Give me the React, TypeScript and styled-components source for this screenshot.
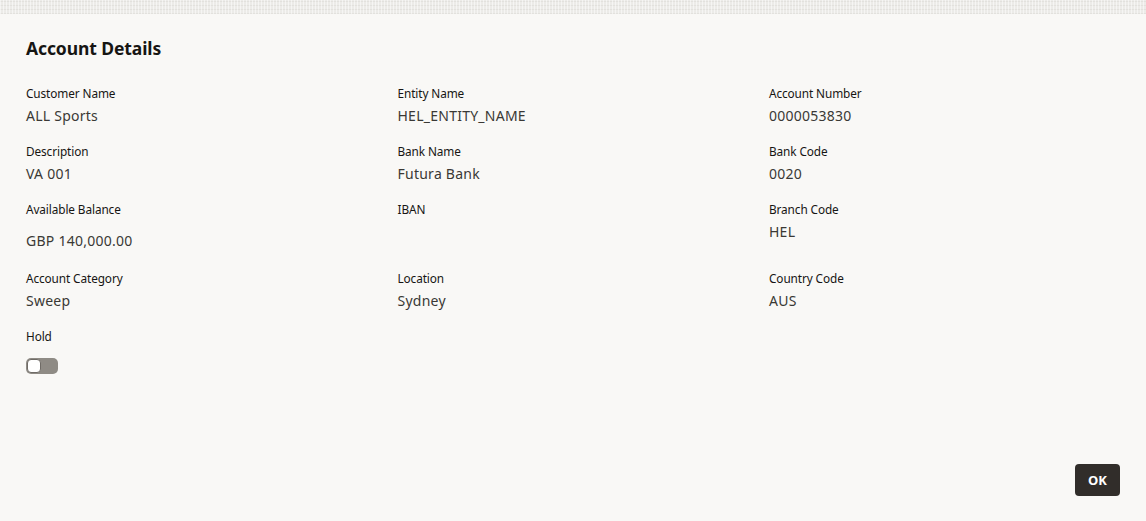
import React, { useState } from 'react';
import { styled, createGlobalStyle } from 'styled-components';

const GlobalStyle = createGlobalStyle`
  html, body {
    margin: 0;
    padding: 0;
    background: #f9f8f6;
    font-family: 'Noto Sans', 'Liberation Sans', sans-serif;
    color: #161513;
  }
`;

const Page = styled.div`
  width: 1146px;
  height: 521px;
  display: flex;
  flex-direction: column;
  background: #f9f8f6;
  overflow: hidden;
`;

const TopStrip = styled.div`
  height: 14px;
  flex-shrink: 0;
  background-color: #ecebe8;
  background-image:
    repeating-linear-gradient(90deg, rgba(255, 255, 255, 0.5) 0 1px, transparent 1px 3px),
    repeating-linear-gradient(0deg, rgba(220, 218, 214, 0.6) 0 1px, transparent 1px 4px);
`;

const Body = styled.div`
  flex: 1;
  padding: 22px 5px 0 26px;
`;

const Heading = styled.h1`
  margin: 0 0 25px;
  font-size: 17.5px;
  line-height: 24px;
  font-weight: 700;
  letter-spacing: -0.1px;
  color: #161513;
`;

const Grid = styled.div`
  display: grid;
  grid-template-columns: repeat(3, 371.5px);
`;

const Field = styled.div`
  margin-bottom: 17px;
`;

const Label = styled.div`
  font-size: 11.8px;
  line-height: 16px;
  letter-spacing: -0.1px;
  color: #161513;
`;

const Value = styled.div<{ $shift?: boolean }>`
  margin-top: ${(p) => (p.$shift ? '14px' : '5px')};
  margin-bottom: ${(p) => (p.$shift ? '2px' : '0')};
  font-size: 14px;
  line-height: 20px;
  letter-spacing: 0.25px;
  color: #3a3835;
  min-height: 20px;
`;

const Toggle = styled.button<{ $on: boolean }>`
  margin-top: 14px;
  width: 32px;
  height: 16px;
  padding: 1px;
  border: none;
  border-radius: 5px;
  background: ${(p) => (p.$on ? '#227e9e' : '#8f8b85')};
  display: flex;
  justify-content: ${(p) => (p.$on ? 'flex-end' : 'flex-start')};
  cursor: pointer;
`;

const Knob = styled.span`
  width: 14px;
  height: 14px;
  border-radius: 4px;
  background: #ffffff;
  box-sizing: border-box;
  border: 1px solid #6f6b66;
`;

const Footer = styled.div`
  display: flex;
  justify-content: flex-end;
  padding: 0 26px 25px;
`;

const OkButton = styled.button`
  width: 45px;
  height: 32px;
  border: none;
  border-radius: 4px;
  background: #312d2a;
  color: #ffffff;
  font-family: 'Noto Sans', 'Liberation Sans', sans-serif;
  font-size: 13px;
  font-weight: 700;
  cursor: pointer;
`;

const fields: { label: string; value: string; shift?: boolean }[] = [
  { label: 'Customer Name', value: 'ALL Sports' },
  { label: 'Entity Name', value: 'HEL_ENTITY_NAME' },
  { label: 'Account Number', value: '0000053830' },
  { label: 'Description', value: 'VA 001' },
  { label: 'Bank Name', value: 'Futura Bank' },
  { label: 'Bank Code', value: '0020' },
  { label: 'Available Balance', value: 'GBP 140,000.00', shift: true },
  { label: 'IBAN', value: '' },
  { label: 'Branch Code', value: 'HEL' },
  { label: 'Account Category', value: 'Sweep' },
  { label: 'Location', value: 'Sydney' },
  { label: 'Country Code', value: 'AUS' },
];

function App() {
  const [hold, setHold] = useState(false);
  return (
    <Page>
      <GlobalStyle />
      <TopStrip />
      <Body>
        <Heading>Account Details</Heading>
        <Grid>
          {fields.map((f) => (
            <Field key={f.label}>
              <Label>{f.label}</Label>
              <Value $shift={f.shift}>{f.value}</Value>
            </Field>
          ))}
          <Field>
            <Label>Hold</Label>
            <Toggle $on={hold} onClick={() => setHold(!hold)} aria-label="Hold">
              <Knob />
            </Toggle>
          </Field>
        </Grid>
      </Body>
      <Footer>
        <OkButton>OK</OkButton>
      </Footer>
    </Page>
  );
}

export default App;
